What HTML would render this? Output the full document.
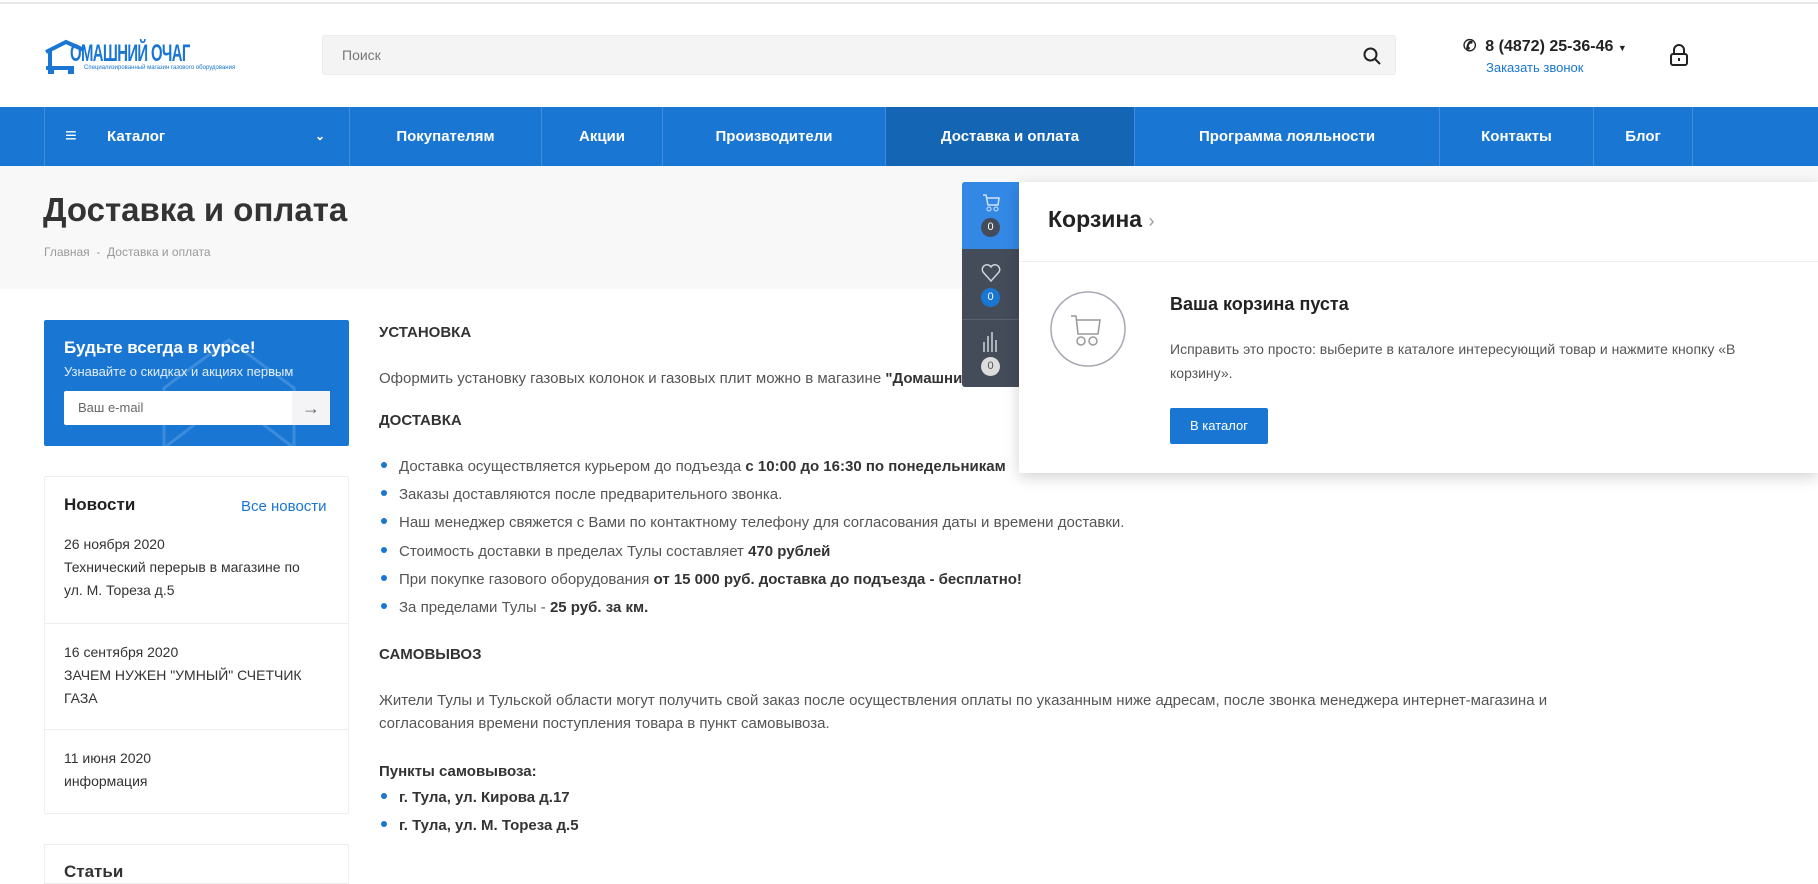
<!DOCTYPE html>
<html><head><meta charset="utf-8"><style>
*{box-sizing:border-box;margin:0;padding:0}
body{width:1818px;height:872px;overflow:hidden;background:#fff;font-family:"Liberation Sans",sans-serif;color:#333;position:relative}
.a{position:absolute}
.nav{top:107px;left:0;width:1818px;height:59px;background:#1976d2}
.nav div{position:absolute;top:0;height:59px;border-left:1px solid #3f8ddc;color:#fff;font-weight:bold;font-size:15px;line-height:59px;text-align:center}
.c{font-size:15px;color:#555;line-height:23px}
.c b{color:#333}
.h{font-weight:bold;font-size:15px;color:#333}
.li{padding-left:20px;position:relative}
.li:before{content:"";position:absolute;left:2px;top:9px;width:6px;height:6px;border-radius:50%;background:#1976d2}
.news{font-size:14px;color:#333;line-height:23px}
</style></head><body>
<div class="a" style="top:2px;left:0;width:1818px;height:2px;background:#e8e8e8"></div>
<!-- logo -->
<div class="a" style="left:44px;top:38px;width:192px;height:38px">
<svg width="192" height="38" viewBox="0 0 192 38"><path d="M2 14 L22 4 L40 12 M6 12 V30 M2 30 H30 M4 34 h6 M24 34 h6" stroke="#1976d2" stroke-width="4" fill="none"/></svg>
<div class="a" style="left:26px;top:2px;font:bold 24px 'Liberation Sans',sans-serif;color:#1976d2;letter-spacing:-1px;white-space:nowrap;transform:scaleX(0.62);transform-origin:left">ОМАШНИЙ ОЧАГ</div>
<div class="a" style="left:40px;top:27px;font-size:6px;color:#1976d2;white-space:nowrap">Специализированный магазин газового оборудования</div>
</div>
<div class="a" style="left:322px;top:35px;width:1074px;height:40px;background:#f4f4f4;border:1px solid #ececec;border-radius:3px;font-size:14px;color:#777;line-height:38px;padding-left:19px">Поиск
<svg class="a" style="right:14px;top:11px" width="18" height="18" viewBox="0 0 18 18"><circle cx="7.5" cy="7.5" r="6" stroke="#222" stroke-width="2" fill="none"/><path d="M12 12l5 5" stroke="#222" stroke-width="2"/></svg></div>
<div class="a" style="left:1463px;top:36px;font-size:16px;font-weight:bold;color:#222">&#9990;&nbsp; 8 (4872) 25-36-46 <span style="font-size:9px">▼</span></div>
<div class="a" style="left:1486px;top:60px;font-size:13px;color:#1976d2">Заказать звонок</div>
<svg class="a" style="left:1668px;top:43px" width="22" height="24" viewBox="0 0 22 24"><path d="M6 11V7a5 5 0 0 1 10 0v4" stroke="#222" stroke-width="2" fill="none"/><rect x="3" y="11" width="16" height="11" rx="2" stroke="#222" stroke-width="2" fill="none"/><path d="M11 15v3" stroke="#222" stroke-width="2"/></svg>
<div class="a nav">
<div style="left:44px;width:305px;text-align:left;padding-left:62px">Каталог<span class="a" style="left:20px;top:0;font-size:20px;font-weight:normal">≡</span><span class="a" style="right:24px;top:0;font-size:12px">⌄</span></div>
<div style="left:349px;width:192px">Покупателям</div>
<div style="left:541px;width:121px">Акции</div>
<div style="left:662px;width:223px">Производители</div>
<div style="left:885px;width:249px;background:#1565b5">Доставка и оплата</div>
<div style="left:1134px;width:305px">Программа лояльности</div>
<div style="left:1439px;width:154px">Контакты</div>
<div style="left:1593px;width:100px;border-right:1px solid #3f8ddc">Блог</div>
</div>
<div class="a" style="top:166px;left:0;width:1818px;height:123px;background:#f8f8f8"></div>
<div class="a" style="left:43px;top:191px;font-size:33px;font-weight:bold;color:#333">Доставка и оплата</div>
<div class="a" style="left:44px;top:245px;font-size:12px;color:#999">Главная &nbsp;-&nbsp; Доставка и оплата</div>
<!-- subscribe -->
<div class="a" style="left:44px;top:320px;width:305px;height:126px;background:#1976d2;border-radius:2px;overflow:hidden;color:#fff">
<svg class="a" style="left:110px;top:18px" width="150" height="110"><path d="M10 110 V50 L75 2 L140 50 V110 M10 110 L75 60 L140 110" stroke="#3d8cdc" stroke-width="3" fill="none"/></svg>
<div class="a" style="left:20px;top:18px;font-size:17px;font-weight:bold">Будьте всегда в курсе!</div>
<div class="a" style="left:20px;top:44px;font-size:13px;color:#e3eefa">Узнавайте о скидках и акциях первым</div>
<div class="a" style="left:20px;top:71px;width:266px;height:34px;background:#fff;border-radius:2px;font-size:13px;color:#666;line-height:34px;padding-left:14px">Ваш e-mail<div class="a" style="right:0;top:0;width:38px;height:34px;background:#f4f4f6;text-align:center;font-size:18px;color:#666">→</div></div>
</div>
<!-- news -->
<div class="a" style="left:44px;top:476px;width:305px;height:338px;border:1px solid #eee;border-radius:2px"></div>
<div class="a" style="left:64px;top:495px;font-size:17px;font-weight:bold;color:#222">Новости</div>
<div class="a" style="left:241px;top:498px;font-size:15px;color:#1976d2">Все новости</div>
<div class="a news" style="left:64px;top:533px;width:258px">26 ноября 2020<br>Технический перерыв в магазине по ул. М. Тореза д.5</div>
<div class="a" style="left:45px;top:623px;width:303px;height:1px;background:#eee"></div>
<div class="a news" style="left:64px;top:641px;width:270px">16 сентября 2020<br>ЗАЧЕМ НУЖЕН "УМНЫЙ" СЧЕТЧИК ГАЗА</div>
<div class="a" style="left:45px;top:729px;width:303px;height:1px;background:#eee"></div>
<div class="a news" style="left:64px;top:747px;width:270px">11 июня 2020<br>информация</div>
<div class="a" style="left:44px;top:844px;width:305px;height:40px;border:1px solid #eee"></div>
<div class="a" style="left:64px;top:862px;font-size:17px;font-weight:bold">Статьи</div>
<!-- content -->
<div class="a h" style="left:379px;top:324px">УСТАНОВКА</div>
<div class="a c" style="left:379px;top:367px;white-space:nowrap">Оформить установку газовых колонок и газовых плит можно в магазине <b>"Домашний Очаг"</b></div>
<div class="a h" style="left:379px;top:412px">ДОСТАВКА</div>
<div class="a c" style="left:379px;top:453px;line-height:28.2px;white-space:nowrap">
<div class="li">Доставка осуществляется курьером до подъезда <b>с 10:00 до 16:30 по понедельникам</b></div>
<div class="li">Заказы доставляются после предварительного звонка.</div>
<div class="li">Наш менеджер свяжется с Вами по контактному телефону для согласования даты и времени доставки.</div>
<div class="li">Стоимость доставки в пределах Тулы составляет <b>470 рублей</b></div>
<div class="li">При покупке газового оборудования <b>от 15 000 руб. доставка до подъезда - бесплатно!</b></div>
<div class="li">За пределами Тулы - <b>25 руб. за км.</b></div>
</div>
<div class="a h" style="left:379px;top:646px">САМОВЫВОЗ</div>
<div class="a c" style="left:379px;top:689px;width:1260px">Жители Тулы и Тульской области могут получить свой заказ после осуществления оплаты по указанным ниже адресам, после звонка менеджера интернет-магазина и согласования времени поступления товара в пункт самовывоза.</div>
<div class="a h" style="left:379px;top:763px">Пункты самовывоза:</div>
<div class="a c" style="left:379px;top:784px;line-height:28px">
<div class="li"><b>г. Тула, ул. Кирова д.17</b></div>
<div class="li"><b>г. Тула, ул. М. Тореза д.5</b></div>
</div>
<!-- side strip -->
<div class="a" style="left:962px;top:182px;width:57px;height:205px;background:#444c5a;border-radius:3px 0 0 3px;overflow:hidden">
<div class="a" style="left:0;top:0;width:57px;height:67px;background:#3388e6"></div>
<div class="a" style="left:0;top:137px;width:57px;height:1px;background:#5a6270"></div>
<svg class="a" style="left:19px;top:11px" width="20" height="20" viewBox="0 0 20 20"><path d="M2 2h3l2 10h10l1-7H6" stroke="#cfe3fb" stroke-width="1.5" fill="none"/><circle cx="8" cy="16" r="2" stroke="#cfe3fb" fill="none"/><circle cx="15" cy="16" r="2" stroke="#cfe3fb" fill="none"/></svg>
<div class="a" style="left:19px;top:36px;width:19px;height:19px;border-radius:50%;background:#444c5a;color:#fff;font-size:11px;text-align:center;line-height:19px">0</div>
<svg class="a" style="left:19px;top:82px" width="20" height="18" viewBox="0 0 20 18"><path d="M10 17 L2 8 A4.5 4.5 0 0 1 10 3 A4.5 4.5 0 0 1 18 8 Z" stroke="#cfd3da" stroke-width="1.5" fill="none"/></svg>
<div class="a" style="left:19px;top:106px;width:19px;height:19px;border-radius:50%;background:#1976d2;color:#fff;font-size:11px;text-align:center;line-height:19px">0</div>
<svg class="a" style="left:20px;top:150px" width="18" height="20" viewBox="0 0 18 20"><path d="M2 20V10M6 20V4M10 20V0M14 20V8" stroke="#cfd3da" stroke-width="1.5"/></svg>
<div class="a" style="left:19px;top:175px;width:19px;height:19px;border-radius:50%;background:#ddd;color:#555;font-size:11px;text-align:center;line-height:19px">0</div>
</div>
<!-- cart panel -->
<div class="a" style="left:1019px;top:182px;width:799px;height:291px;background:#fff;box-shadow:0 4px 14px rgba(0,0,0,0.18)">
<div class="a" style="left:29px;top:24px;font-size:23px;font-weight:bold;color:#222">Корзина <span style="color:#999;font-weight:normal;font-size:18px">›</span></div>
<div class="a" style="left:0;top:79px;width:799px;height:1px;background:#eee"></div>
<svg class="a" style="left:30px;top:108px" width="78" height="78" viewBox="0 0 78 78"><circle cx="39" cy="39" r="37" stroke="#a5a8b2" stroke-width="1.5" fill="none"/><path d="M22 26h5l2 18h20l2-14H28" stroke="#999" stroke-width="1.5" fill="none"/><circle cx="32" cy="51" r="4" stroke="#999" stroke-width="1.5" fill="none"/><circle cx="44" cy="51" r="4" stroke="#999" stroke-width="1.5" fill="none"/></svg>
<div class="a" style="left:151px;top:112px;font-size:18px;font-weight:bold;color:#222">Ваша корзина пуста</div>
<div class="a" style="left:151px;top:155px;width:620px;font-size:14px;color:#555;line-height:24px">Исправить это просто: выберите в каталоге интересующий товар и нажмите кнопку «В корзину».</div>
<div class="a" style="left:151px;top:226px;width:98px;height:36px;background:#1976d2;border-radius:2px;color:#fff;font-size:13px;text-align:center;line-height:36px">В каталог</div>
</div>
</body></html>
